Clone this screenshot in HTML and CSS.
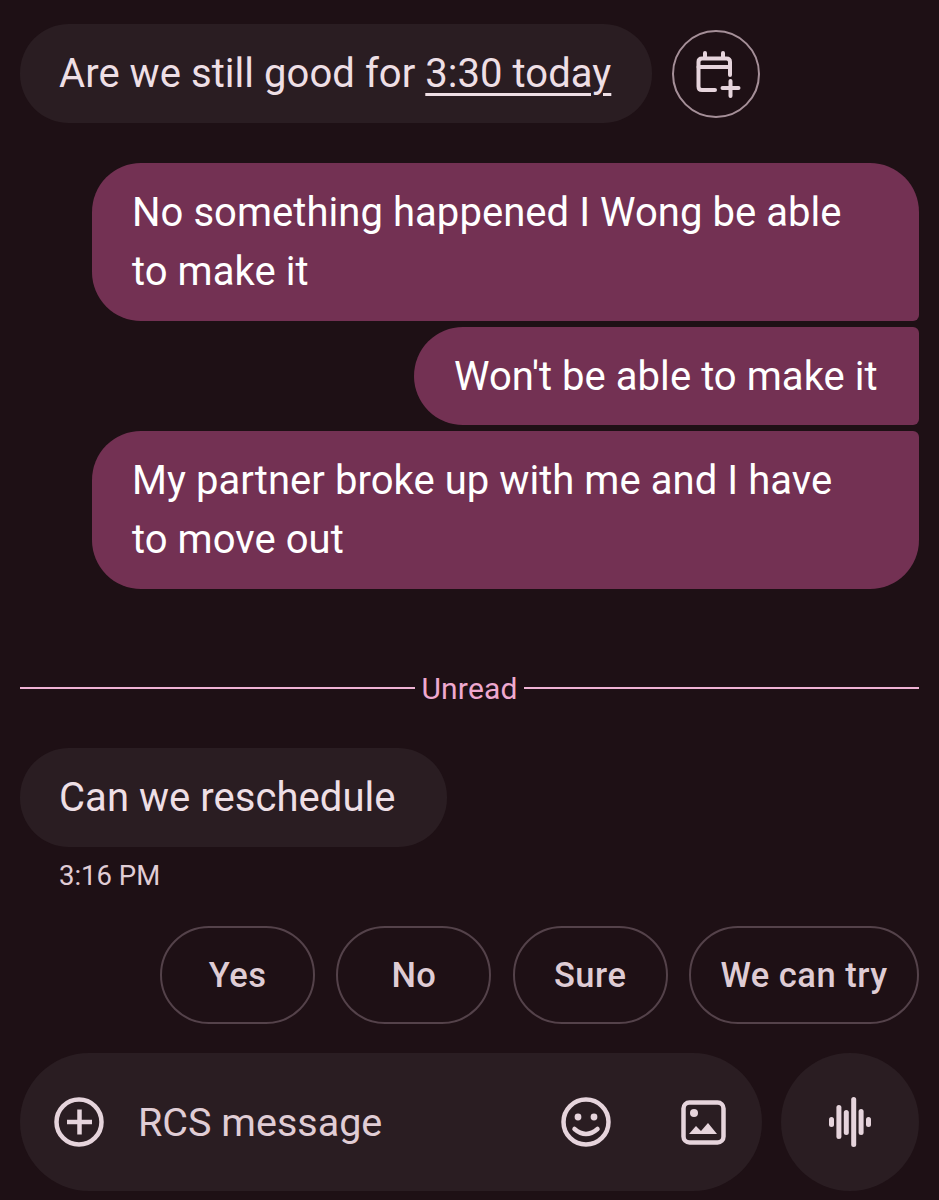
FILE: index.html
```html
<!DOCTYPE html>
<html lang="en">
<head>
<meta charset="utf-8">
<title>Messages</title>
<link rel="stylesheet" href="styles.css">
</head>
<body>
<main class="screen">
  <section class="row-in first">
    <div class="bubble in top-bubble">Are we still good for <span class="link">3:30 today</span></div>
    <button class="cal-btn" aria-label="Add to calendar">
      <svg class="cal-icon" viewBox="0 0 50 50" fill="none" stroke="#e6d4dc" stroke-width="4" stroke-linecap="round" stroke-linejoin="round">
        <path d="M24 41H11Q7.500 41 7.500 37.500V13Q7.500 9.500 11 9.500H35.500Q39 9.500 39 13V26"/>
        <path d="M7.500 18H39M14 4V9M32 4V9"/>
        <path d="M31.500 39H47.500M39.500 32V47"/>
      </svg>
    </button>
  </section>

  <section class="sent">
    <div class="bubble out out-first">No something happened I Wong be able<br>to make it</div>
    <div class="bubble out out-mid short">Won't be able to make it</div>
    <div class="bubble out out-last">My partner broke up with me and I have<br>to move out</div>
  </section>

  <div class="divider"><span class="rule"></span><span class="divider-label">Unread</span><span class="rule"></span></div>

  <div class="bubble in reply">Can we reschedule</div>
  <div class="time">3:16 PM</div>

  <div class="chips">
    <button class="chip">Yes</button>
    <button class="chip">No</button>
    <button class="chip">Sure</button>
    <button class="chip w-try">We can try</button>
  </div>

  <footer class="composer">
    <div class="input">
      <svg class="ic ic-plus" viewBox="0 0 50 50" fill="none" stroke="#e6d4dc" stroke-width="4.500"><circle cx="25" cy="25" r="22.500"/><path d="M13 25H38M25.500 12.500V37.500"/></svg>
      <span class="placeholder">RCS message</span>
      <svg class="ic ic-smile" viewBox="0 0 50 50" fill="none" stroke="#e6d4dc" stroke-width="4.500"><circle cx="25" cy="25" r="22.500"/><circle cx="17" cy="20" r="3.400" fill="#e6d4dc" stroke="none"/><circle cx="33" cy="20" r="3.400" fill="#e6d4dc" stroke="none"/><path d="M13.500 32Q25 42 36.500 32" stroke-linecap="round"/></svg>
      <svg class="ic ic-image" viewBox="0 0 45 45" fill="none"><rect x="2.500" y="2.500" width="40" height="40" rx="6" stroke="#e6d4dc" stroke-width="4.500"/><circle cx="13" cy="13" r="4" fill="#e6d4dc"/><path d="M8 34L15 26L20 31L27 23L36 34Z" fill="#e6d4dc"/></svg>
    </div>
    <button class="mic" aria-label="Voice message">
      <svg class="wave" viewBox="0 0 42 50" fill="#e6d4dc"><rect x="0" y="20" width="5" height="10" rx="2.500"/><rect x="7.400" y="8" width="5" height="34" rx="2.500"/><rect x="14.800" y="13" width="5" height="25" rx="2.500"/><rect x="22.200" y="0" width="5" height="50" rx="2.500"/><rect x="29.600" y="12" width="5" height="26" rx="2.500"/><rect x="37" y="20" width="5" height="10" rx="2.500"/></svg>
    </button>
  </footer>
</main>
</body>
</html>
```
FILE: styles.css
```css
* { box-sizing: border-box; }
html, body { margin: 0; padding: 0; background: #1e1015; }
body { font-family: Roboto, "Open Sans", sans-serif; color: #eedfe5; }
button { font: inherit; color: inherit; background: none; padding: 0; }
.screen { width: 939px; height: 1200px; padding: 24px 20px 9px; display: flex; flex-direction: column; overflow: hidden; }

.bubble { font-size: 40px; letter-spacing: 0.05px; line-height: 59px; padding: 20px 39px; }
.in { background: #2a1d22; border-radius: 49px; }
.row-in { display: flex; align-items: center; gap: 20px; }
.top-bubble { width: 632px; height: 99px; white-space: nowrap; }
.link { text-decoration: underline; text-decoration-thickness: 3px; text-underline-offset: 6px; }
.cal-btn { width: 88px; height: 88px; border-radius: 50%; border: 2.500px solid #a58f98; display: flex; align-items: center; justify-content: center; }
.cal-icon { width: 50px; height: 50px; flex: none; }

.sent { margin-top: 40px; display: flex; flex-direction: column; align-items: flex-end; gap: 6px; }
.out { background: #733153; color: #fff; width: 827px; height: 158px; padding-left: 40px; }
.short { width: 505px; height: 98px; }
.out-first { border-radius: 49px 49px 6px 49px; }
.out-mid { border-radius: 49px 6px 6px 49px; }
.out-last { border-radius: 49px 6px 49px 49px; }

.divider { margin-top: 87px; height: 24px; display: flex; align-items: center; gap: 6px; color: #efa9cf; font-size: 30px; }
.divider-label { letter-spacing: 0.2px; }
.rule { flex: 1; height: 2.500px; background: #efb2d4; }

.reply { margin-top: 48px; width: 427px; height: 99px; white-space: nowrap; }
.time { margin: 12px 0 0 39px; font-size: 27.500px; line-height: 34px; color: #e0cdd5; }

.chips { margin-top: 33px; display: flex; justify-content: flex-end; gap: 21.300px; }
.chip { height: 98px; width: 155px; border: 2px solid #54424a; border-radius: 49px; font-size: 34.500px; letter-spacing: 0.5px; font-weight: 500; color: #dfccd4; }
.w-try { width: 230px; }

.composer { margin-top: 29px; display: flex; justify-content: space-between; }
.input { width: 742px; height: 138px; border-radius: 69px; background: #2a1d22; display: flex; align-items: center; padding-left: 34px; }
.ic { display: block; flex: none; }
.ic-plus { width: 50px; height: 50px; }
.placeholder { font-size: 39.500px; margin-left: 34px; width: 401px; color: #e0cdd5; }
.ic-smile { width: 50px; height: 50px; margin-left: 22px; }
.ic-image { width: 45px; height: 45px; margin-left: 70px; }
.mic { width: 138px; height: 138px; border: 0; border-radius: 50%; background: #2a1d22; display: flex; align-items: center; justify-content: center; }
.wave { width: 42px; height: 50px; }
```
